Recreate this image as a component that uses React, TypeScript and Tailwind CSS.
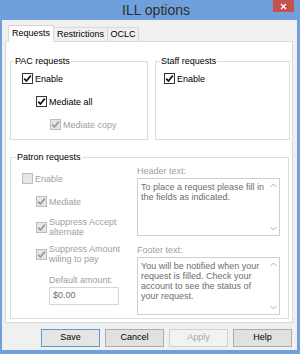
import React from "react";

const F = { fontFamily: '"Liberation Sans", Arial, sans-serif' };

function Check({ checked, disabled }: { checked?: boolean; disabled?: boolean }) {
  return (
    <span
      className={
        "inline-flex w-[11px] h-[11px] shrink-0 items-center justify-center border " +
        (disabled ? "border-[#bcbcbc] bg-[#e6e6e6]" : "border-[#333333] bg-white")
      }
    >
      {checked && (
        <svg width="9" height="9" viewBox="0 0 9 9">
          <path
            d="M1.2 4.6 L3.4 7 L7.8 1.6"
            fill="none"
            stroke={disabled ? "#9a9a9a" : "#111"}
            strokeWidth="1.7"
          />
        </svg>
      )}
    </span>
  );
}

function Row({
  label,
  checked,
  disabled,
  className = "",
}: {
  label: React.ReactNode;
  checked?: boolean;
  disabled?: boolean;
  className?: string;
}) {
  return (
    <div className={"flex items-center gap-[2px] " + className}>
      <Check checked={checked} disabled={disabled} />
      <span className={"leading-[10px] " + (disabled ? "text-[#a0a0a0]" : "text-black")}>{label}</span>
    </div>
  );
}

function TextBox({ lines, h }: { lines: string[]; h: string }) {
  return (
    <div className={"relative flex w-[143px] border border-[#cfcfcf] bg-white " + h}>
      <div className="flex-1 pl-[3px] pt-[3px] text-[#6d6d6d] leading-[10px]">
        {lines.map((l) => (
          <div key={l}>{l}</div>
        ))}
      </div>
      <div className="flex w-[12px] flex-col items-center justify-between py-[4px]">
        <svg width="7" height="5" viewBox="0 0 7 5">
          <path d="M0.5 4 L3.5 1 L6.5 4" fill="none" stroke="#b0b0b0" strokeWidth="1" />
        </svg>
        <svg width="7" height="5" viewBox="0 0 7 5">
          <path d="M0.5 1 L3.5 4 L6.5 1" fill="none" stroke="#b0b0b0" strokeWidth="1" />
        </svg>
      </div>
    </div>
  );
}

function Btn({ children, variant }: { children: React.ReactNode; variant?: "default" | "disabled" }) {
  const cls =
    variant === "default"
      ? "border-[#5b9bd5] bg-[#e5e5e5] text-black"
      : variant === "disabled"
      ? "border-[#d0d0d0] bg-[#f2f2f2] text-[#a8a8a8]"
      : "border-[#adadad] bg-[#e1e1e1] text-black";
  return (
    <div className={"flex h-[18px] w-[59px] items-center justify-center border " + cls}>{children}</div>
  );
}

export default function App() {
  return (
    <div className="flex h-[354px] w-[300px] flex-col bg-[#6fa0dc] text-[9px]" style={F}>
      {/* title bar */}
      <div className="relative flex h-[20px] items-center justify-center pl-[12px]">
        <span className="text-[14px] leading-[16px] text-[#2e2e2e]">ILL options</span>
        <div className="absolute right-[6px] top-0 flex h-[12px] w-[21px] items-center justify-center bg-[#c75050]">
          <svg width="7" height="7" viewBox="0 0 7 7">
            <path d="M1 1 L6 6 M6 1 L1 6" stroke="#fff" strokeWidth="1.4" />
          </svg>
        </div>
      </div>

      {/* client */}
      <div className="ml-[2px] mr-[3px] mb-[4px] flex flex-1 flex-col bg-[#f0f0f0]">
        {/* tabs */}
        <div className="flex items-end pl-[6px] pt-[5px]">
          <div className="relative z-10 -mb-px flex h-[17px] w-[46px] items-center justify-center border border-b-0 border-[#d9d9d9] bg-white text-black">
            Requests
          </div>
          <div className="flex h-[14px] w-[54px] items-center justify-center border border-b-0 border-l-0 border-[#d9d9d9] bg-[#f0f0f0] text-black">
            Restrictions
          </div>
          <div className="flex h-[14px] w-[31px] items-center justify-center border border-b-0 border-l-0 border-[#d9d9d9] bg-[#f0f0f0] text-black">
            OCLC
          </div>
        </div>

        {/* tab page */}
        <div className="ml-[3px] flex h-[282px] w-[288px] flex-col border border-[#d9d9d9] bg-white pl-[4px] pt-[14px]">
          <div className="flex gap-[7px]">
            <fieldset className="h-[84px] w-[138px] border border-[#dcdcdc]">
              <legend className="ml-[3px] px-[1px] leading-[11px] text-black">PAC requests</legend>
              <div className="pl-[11px]">
                <Row label="Enable" checked className="mt-[6px]" />
                <Row label="Mediate all" checked className="mt-[12px] ml-[14px]" />
                <Row label="Mediate copy" checked disabled className="mt-[12px] ml-[28px]" />
              </div>
            </fieldset>
            <fieldset className="h-[84px] w-[135px] border border-[#dcdcdc]">
              <legend className="ml-[4px] px-[1px] leading-[11px] text-black">Staff requests</legend>
              <div className="pl-[8px]">
                <Row label="Enable" checked className="mt-[6px]" />
              </div>
            </fieldset>
          </div>

          <fieldset className="mt-[12px] h-[167px] w-[279px] border border-[#dcdcdc]">
            <legend className="ml-[5px] px-[1px] leading-[11px] text-black">Patron requests</legend>
            <div className="flex pl-[11px]">
              <div className="flex w-[115px] flex-col">
                <Row label="Enable" disabled className="mt-[10px]" />
                <Row label="Mediate" checked disabled className="mt-[12px] ml-[14px]" />
                <Row
                  label={
                    <>
                      Suppress Accept
                      <br />
                      alternate
                    </>
                  }
                  checked
                  disabled
                  className="mt-[10px] ml-[14px]"
                />
                <Row
                  label={
                    <>
                      Suppress Amount
                      <br />
                      wiling to pay
                    </>
                  }
                  checked
                  disabled
                  className="mt-[7px] ml-[14px]"
                />
                <div className="ml-[27px] mt-[11px] leading-[10px] text-[#a0a0a0]">Default amount:</div>
                <div className="ml-[27px] mt-[2px] flex h-[18px] w-[70px] items-center border border-[#d6d6d6] pl-[3px] text-[#6d6d6d]">
                  $0.00
                </div>
              </div>
              <div className="flex flex-col">
                <div className="mt-[3px] leading-[10px] text-[#a0a0a0]">Header text:</div>
                <div className="mt-[2px]">
                  <TextBox h="h-[58px]" lines={["To place a request please fill in", "the fields as indicated."]} />
                </div>
                <div className="mt-[9px] leading-[10px] text-[#a0a0a0]">Footer text:</div>
                <div className="mt-[2px]">
                  <TextBox
                    h="h-[58px]"
                    lines={[
                      "You will be notified when your",
                      "request is filled. Check your",
                      "account to see the status of",
                      "your request.",
                    ]}
                  />
                </div>
              </div>
            </div>
          </fieldset>
        </div>

        {/* buttons */}
        <div className="mt-[6px] flex justify-end gap-[5px] pr-[5px]">
          <Btn variant="default">Save</Btn>
          <Btn>Cancel</Btn>
          <Btn variant="disabled">Apply</Btn>
          <Btn>Help</Btn>
        </div>
      </div>
    </div>
  );
}
